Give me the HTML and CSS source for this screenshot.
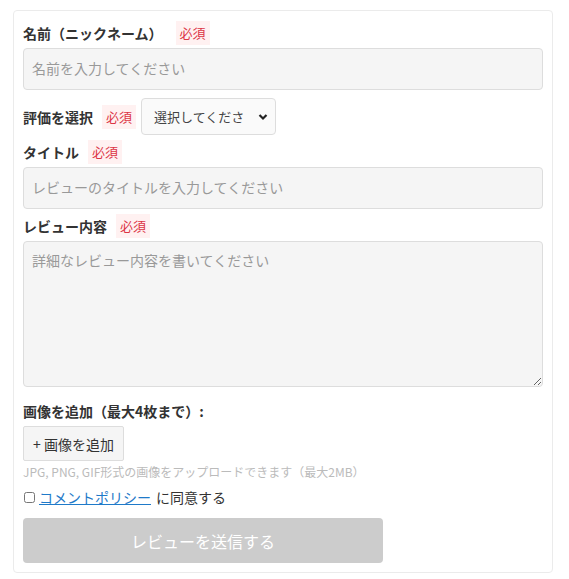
FILE: index.html
```html
<!DOCTYPE html>
<html lang="ja">
<head>
    <meta charset="UTF-8">
    <meta name="viewport" content="width=device-width, initial-scale=1.0">
    <link rel="stylesheet" href="styles.css">
</head>
<body>
    <form class="review-form">
        <div class="form-group">
            <div class="label-row">
                <label class="form-label" for="name">名前（ニックネーム）</label>
                <span class="required required-wide">必須</span>
            </div>
            <input type="text" id="name" class="input-field" placeholder="名前を入力してください">
        </div>

        <div class="rating-row">
            <label class="form-label" for="rating">評価を選択</label>
            <span class="required">必須</span>
            <div class="select-wrap">
                <select id="rating" class="rating-select">
                    <option>選択してください</option>
                    <option>★★★★★</option>
                    <option>★★★★</option>
                    <option>★★★</option>
                    <option>★★</option>
                    <option>★</option>
                </select>
                <svg class="select-arrow" width="10" height="8" viewBox="0 0 10 8">
                    <path d="M1.5 2 L5 5.5 L8.5 2" fill="none" stroke="#222" stroke-width="2.2"/>
                </svg>
            </div>
        </div>

        <div class="form-group">
            <div class="label-row">
                <label class="form-label" for="title">タイトル</label>
                <span class="required">必須</span>
            </div>
            <input type="text" id="title" class="input-field" placeholder="レビューのタイトルを入力してください">
        </div>

        <div class="form-group">
            <div class="label-row">
                <label class="form-label" for="content">レビュー内容</label>
                <span class="required">必須</span>
            </div>
            <textarea id="content" class="input-field text-area" placeholder="詳細なレビュー内容を書いてください"></textarea>
        </div>

        <div class="image-group">
            <div class="form-label image-label">画像を追加（最大4枚まで）:</div>
            <button type="button" class="add-btn">+ 画像を追加</button>
            <p class="hint">JPG, PNG, GIF形式の画像をアップロードできます（最大2MB）</p>
        </div>

        <div class="agree-row">
            <input type="checkbox" id="agree" class="check-box">
            <a href="#" class="policy-link">コメントポリシー</a>
            <label for="agree" class="agree-text">に同意する</label>
        </div>

        <button type="button" class="submit-btn" disabled>レビューを送信する</button>
    </form>
</body>
</html>
```

FILE: styles.css
```css
body {
    margin: 0;
    background: #fff;
    font-family: "Noto Sans CJK JP", "Noto Sans", sans-serif;
    color: #333;
}
.review-form {
    width: 540px;
    box-sizing: border-box;
    margin: 10px 0 0 13px;
    padding: 10px 9px 9px 9px;
    border: 1px solid #ebebeb;
    border-radius: 4px;
}
.form-group {
    margin-bottom: 5px;
}
.label-row {
    display: flex;
    align-items: center;
    height: 24px;
    margin-bottom: 3px;
}
.form-label {
    font-size: 14px;
    font-weight: bold;
    color: #333;
    line-height: 24px;
}
.required {
    display: inline-block;
    margin-left: 9px;
    padding: 0 4px;
    height: 24px;
    line-height: 23px;
    font-size: 13px;
    color: #dc3545;
    background: #fff1f1;
}
.required-wide {
    margin-left: 13px;
}
.input-field {
    display: block;
    width: 100%;
    box-sizing: border-box;
    height: 42px;
    padding: 7px 8px 9px;
    border: 1px solid #ddd;
    border-radius: 4px;
    background: #f5f5f5;
    font-family: inherit;
    font-size: 14px;
    color: #333;
    outline: none;
}
.input-field::placeholder {
    color: #999;
}
.text-area {
    height: 146px;
    resize: vertical;
    padding-top: 8px;
    line-height: 20px;
}
.rating-row {
    display: flex;
    align-items: center;
    margin: 8px 0 5px;
}
.rating-row .required {
    margin-left: 9px;
    margin-right: 5px;
}
.select-wrap {
    position: relative;
}
.rating-select {
    -webkit-appearance: none;
    appearance: none;
    width: 135px;
    height: 37px;
    padding: 0 30px 0 12px;
    border: 1px solid #ddd;
    border-radius: 4px;
    background: #fafafa;
    font-family: inherit;
    font-size: 13px;
    color: #444;
}
.select-arrow {
    position: absolute;
    right: 8px;
    top: 15px;
    pointer-events: none;
}
.image-group {
    margin-top: 12px;
}
.image-label {
    margin-bottom: 3px;
}
.add-btn {
    display: block;
    height: 35px;
    padding: 0 9px;
    border: 1px solid #ddd;
    border-radius: 2px;
    background: #f5f5f5;
    font-family: inherit;
    font-size: 14px;
    color: #333;
}
.hint {
    margin: 3px 0 0;
    font-size: 12px;
    line-height: 16px;
    color: #bbb;
}
.agree-row {
    display: flex;
    align-items: center;
    margin-top: 7px;
    height: 20px;
    font-size: 14px;
}
.check-box {
    margin: 0 4px 0 1px;
    width: 11px;
    height: 11px;
}
.policy-link {
    color: #1f7ac9;
    text-decoration: underline;
    margin-right: 5px;
}
.agree-text {
    color: #333;
}
.submit-btn {
    display: block;
    width: 360px;
    height: 45px;
    margin-top: 11px;
    border: 0;
    border-radius: 4px;
    background: #ccc;
    color: #fff;
    font-family: inherit;
    font-size: 16px;
}
```
